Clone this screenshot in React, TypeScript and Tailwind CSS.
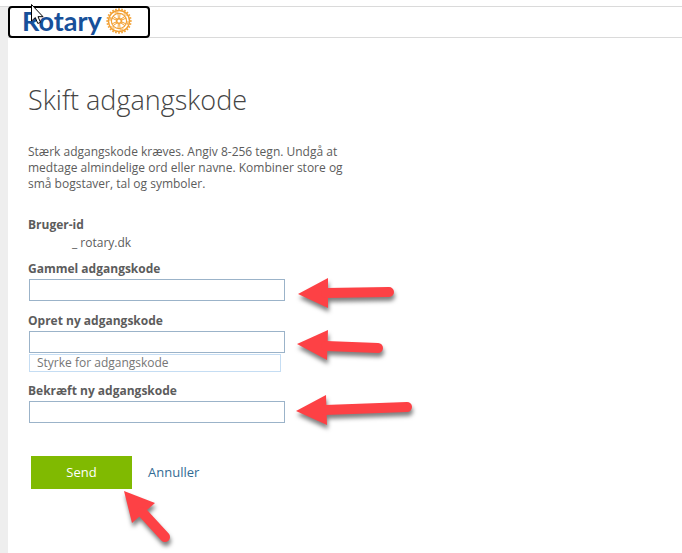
import React from "react";

function RotaryWheel() {
  const teeth = Array.from({ length: 24 }, (_, i) => i * 15);
  const spokes = Array.from({ length: 6 }, (_, i) => i * 60);
  return (
    <svg viewBox="-13 -13 26 26" className="size-[26px] shrink-0" aria-hidden="true">
      <g fill="none" stroke="#f2a033">
        {teeth.map((a) => (
          <path key={a} d="M0 -10.8V-12.7" strokeWidth="1.6" transform={`rotate(${a})`} />
        ))}
        <circle r="10.5" strokeWidth="1.4" />
        <circle r="7.6" strokeWidth="1.2" />
        <circle r="9" strokeWidth="0.9" strokeDasharray="4 5.4" />
        {spokes.map((a) => (
          <path key={a} d="M-0.6 -2.5L-1 -7.4M0.6 -2.5L1 -7.4" strokeWidth="0.9" transform={`rotate(${a})`} />
        ))}
        <circle r="2.3" strokeWidth="1.5" />
      </g>
    </svg>
  );
}

function Header() {
  return (
    <header className="flex h-[31px] items-start border-b border-[#dadada]">
      <a
        href="#"
        className="-mt-px flex h-8 w-[142px] shrink-0 items-center rounded border-2 border-black bg-white pb-0.5 pl-3"
      >
        <span className="w-[84px] font-['Lato','Open_Sans',sans-serif] text-[27px] leading-6 font-bold text-[#17509a]">
          Rotary
        </span>
        <RotaryWheel />
      </a>
    </header>
  );
}

function PasswordField({ id, label, children }: { id: string; label: string; children?: React.ReactNode }) {
  return (
    <div>
      <label htmlFor={id} className="block leading-5 font-bold">
        {label}
      </label>
      <input
        id={id}
        type="password"
        className="ml-px block h-[22px] w-64 border border-[#9bb3c9] bg-white px-1 outline-none"
      />
      {children}
    </div>
  );
}

const arrows = [
  { head: "298,294 328,278 328,308", shaft: "M326 293L389 292" },
  { head: "297,344 328,330 327,360", shaft: "M326 346L378 348" },
  { head: "296,411 326,395 327,425", shaft: "M325 410L407 407" },
  { head: "124,491 155,503 132,523", shaft: "M142 512L165 537" },
];

function Annotations() {
  return (
    <svg
      width="430"
      height="553"
      viewBox="0 0 430 553"
      className="pointer-events-none absolute top-0 left-0"
      aria-hidden="true"
    >
      <g className="drop-shadow-[1px_4px_2px_rgba(0,0,0,0.5)]">
        {arrows.map((a) => (
          <g key={a.head}>
            <polygon points={a.head} fill="#fd4145" />
            <path d={a.shaft} stroke="#fd4145" strokeWidth="10" strokeLinecap="round" />
          </g>
        ))}
      </g>
      <path
        d="M31.5 4.5V21L35.3 17.6L37.8 23.5L40.5 22.3L38 16.7H43Z"
        fill="#fff"
        stroke="#000"
        strokeWidth="1"
      />
    </svg>
  );
}

export default function App() {
  return (
    <div className="relative flex min-h-screen flex-col overflow-hidden bg-white pt-1.5 font-['Open_Sans','Noto_Sans',sans-serif] text-xs text-[#5c5c5c]">
      <div className="flex flex-1 flex-col border-t border-[#dadada]">
        <div className="flex-1 border-l-8 border-[#eeeeee]">
          <Header />
          <main className="pl-5">
            <h1 className="mt-11 text-[27px] leading-9 font-light text-[#444]">Skift adgangskode</h1>
            <p className="mt-[26px] w-80 leading-4">
              Stærk adgangskode kræves. Angiv 8-256 tegn. Undgå at
              <br />
              medtage almindelige ord eller navne. Kombiner store og
              <br />
              små bogstaver, tal og symboler.
            </p>
            <form className="mt-6" onSubmit={(e) => e.preventDefault()}>
              <div className="leading-[18px]">
                <div className="font-bold">Bruger-id</div>
                <div className="pl-11">_ rotary.dk</div>
              </div>
              <div className="mt-[7px] flex flex-col gap-2.5">
                <PasswordField id="old" label="Gammel adgangskode" />
                <PasswordField id="new" label="Opret ny adgangskode">
                  <div className="mt-px -mb-px ml-px h-[18px] w-[252px] border border-[#c5ddf3] pl-[7px] leading-4 text-[#767676]">
                    Styrke for adgangskode
                  </div>
                </PasswordField>
                <PasswordField id="confirm" label="Bekræft ny adgangskode" />
              </div>
              <div className="mt-[33px] flex items-center gap-4 pl-[3px] text-[13px]">
                <button type="submit" className="h-[33px] w-[101px] bg-[#80ba01] text-white">
                  Send
                </button>
                <a href="#" className="text-[#336b94]">
                  Annuller
                </a>
              </div>
            </form>
          </main>
        </div>
      </div>
      <Annotations />
    </div>
  );
}
